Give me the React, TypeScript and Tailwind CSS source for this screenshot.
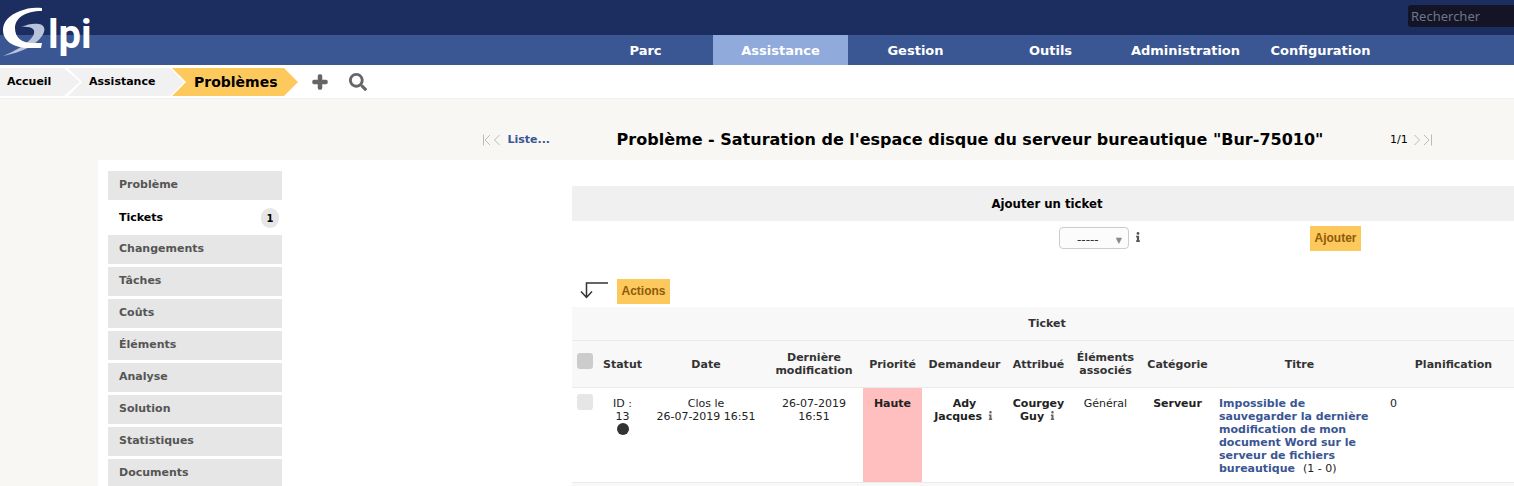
import { FaInfo, FaPlus, FaSearch } from 'react-icons/fa';

const menu = ['Parc', 'Assistance', 'Gestion', 'Outils', 'Administration', 'Configuration'];

const tabs = [
  { label: 'Problème' },
  { label: 'Tickets', count: 1 },
  { label: 'Changements' },
  { label: 'Tâches' },
  { label: 'Coûts' },
  { label: 'Éléments' },
  { label: 'Analyse' },
  { label: 'Solution' },
  { label: 'Statistiques' },
  { label: 'Documents' },
];

const columns = [
  { label: 'Statut', width: 'w-[49px]' },
  { label: 'Date', width: 'w-[118px]' },
  { label: 'Dernière modification', width: 'w-[98px]' },
  { label: 'Priorité', width: 'w-[59px]' },
  { label: 'Demandeur', width: 'w-[85px]' },
  { label: 'Attribué', width: 'w-[63px]' },
  { label: 'Éléments associés', width: 'w-[71px]' },
  { label: 'Catégorie', width: 'w-[73px]' },
  { label: 'Titre', width: 'w-[171px]' },
  { label: 'Planification', width: 'w-auto' },
];

function Logo() {
  return (
    <a href="#" aria-label="Glpi" className="absolute left-0 top-0">
      <svg width="100" height="65" viewBox="0 0 100 65">
        <path
          d="M21 27C28 24 34 23 39 24C45 25 46 30 42 36C36 45 23 52 3 56C15 51 28 44 33 36C37 29 31 26 21 27Z"
          fill="#b9c4dc"
        />
        <path
          d="M42 8C34 7 27 8 20 11C9 15 3 22 3 30C3 41 14 48 29 48H41L42 43H33C21 43 15 37 15 28C15 18 25 11 42 11Z"
          fill="#fff"
        />
        <text x="48" y="48" fontSize="40" fontWeight="700" fontFamily="Roboto, sans-serif" fill="#fff">
          lpi
        </text>
      </svg>
    </a>
  );
}

function Header() {
  return (
    <header className="relative">
      <div className="flex h-[35px] justify-end bg-[#1c2e60] pt-[5px]">
        <input
          type="text"
          aria-label="Rechercher"
          placeholder="Rechercher"
          className="h-[22px] w-[106px] rounded-l-[3px] bg-[#131527] px-[3px] font-['Noto_Sans',sans-serif] text-[13px] text-white placeholder:text-[#6f7489]"
        />
      </div>
      <nav className="flex h-[30px] justify-end bg-[#3a5693] pr-[126px]">
        {menu.map((item) => (
          <a
            key={item}
            href="#"
            className={`flex w-[135px] items-center justify-center pt-px text-[13px] font-bold text-white ${
              item === 'Assistance' ? 'bg-[#8faadb]' : ''
            }`}
          >
            {item}
          </a>
        ))}
      </nav>
      <Logo />
    </header>
  );
}

function Breadcrumb() {
  return (
    <div className="flex h-[34px] items-center border-b border-[#f0f0f0] bg-white pt-px">
      <a
        href="#"
        className="flex h-7 w-[80px] items-center bg-[#f1f1f1] pl-[7px] text-[11px] font-bold text-black [clip-path:polygon(0_0,64px_0,100%_50%,64px_100%,0_100%)]"
      >
        Accueil
      </a>
      <a
        href="#"
        className="-ml-3 flex h-7 w-[116px] items-center bg-[#f1f1f1] pl-[21px] text-[11px] font-bold text-black [clip-path:polygon(0_0,102px_0,100%_50%,102px_100%,0_100%,14px_50%)]"
      >
        Assistance
      </a>
      <a
        href="#"
        className="-ml-3 flex h-7 w-[126px] items-center bg-[#fec95c] pl-[22px] text-[14px] font-bold text-black [clip-path:polygon(0_0,112px_0,100%_50%,112px_100%,0_100%,14px_50%)]"
      >
        Problèmes
      </a>
      <button type="button" aria-label="Ajouter" className="ml-3.5 text-[#666]">
        <FaPlus size={16} stroke="currentColor" strokeWidth={48} className="overflow-visible" />
      </button>
      <button type="button" aria-label="Rechercher" className="ml-[21px] text-[#666]">
        <FaSearch size={18} />
      </button>
    </div>
  );
}

function TitleBar() {
  return (
    <div className="ml-[98px] grid h-[61px] grid-cols-[452px_1fr_124px] items-center pt-[21px]">
      <div className="flex items-center justify-end">
        <svg width="18" height="12" viewBox="0 0 18 12" fill="none" stroke="#bbb" className="mr-[7px]">
          <path d="M1.5 0.5V11.5M8 1L3 6L8 11M17.5 1L12.5 6L17.5 11" />
        </svg>
        <a href="#" className="text-[11px] font-bold text-[#3a5693]">
          Liste...
        </a>
      </div>
      <h1 className="text-center text-[16px] font-bold whitespace-nowrap text-black">
        Problème - Saturation de l'espace disque du serveur bureautique "Bur-75010"
      </h1>
      <div className="flex items-center gap-1.5 text-[11px] text-black">
        1/1
        <svg width="18" height="12" viewBox="0 0 18 12" fill="none" stroke="#bbb">
          <path d="M0.5 1L5.5 6L0.5 11M10 1L15 6L10 11M17.5 0.5V11.5" />
        </svg>
      </div>
    </div>
  );
}

function Sidebar() {
  return (
    <nav className="flex w-[174px] shrink-0 flex-col pt-[11px] text-[11px] font-bold">
      {tabs.map((tab) =>
        tab.count ? (
          <a
            key={tab.label}
            href="#"
            className="flex h-[35px] items-center justify-between pt-px pr-[3px] pl-[11px] text-black"
          >
            {tab.label}
            <span className="flex h-5 w-[18px] items-center justify-center rounded-full bg-[#e6e6e6] text-[10px]">
              {tab.count}
            </span>
          </a>
        ) : (
          <a
            key={tab.label}
            href="#"
            className="mb-[3px] h-[29px] bg-[#e6e6e6] pt-1.5 pl-[11px] leading-[15px] text-[#555] first:mb-0"
          >
            {tab.label}
          </a>
        )
      )}
    </nav>
  );
}

function AddTicket() {
  return (
    <form>
      <h2 className="bg-[#f0f0f0] text-center font-['DejaVu_Sans_Condensed','DejaVu_Sans',sans-serif] text-[13px] leading-[35px] font-bold text-black">
        Ajouter un ticket
      </h2>
      <div className="flex items-start justify-end pt-[5px] pr-[161px]">
        <div className="relative mt-px">
          <select
            aria-label="Ticket"
            className="block h-[22px] w-[70px] appearance-none rounded-[4px] border border-[#ccc] bg-[#fcfcfc] pt-1 pl-[17px] text-[12px] leading-4 text-[#333]"
          >
            <option>-----</option>
          </select>
          <span className="pointer-events-none absolute top-2 right-[7px] text-[8px] leading-3 text-[#888]">▼</span>
        </div>
        <FaInfo size={10} className="mt-1.5 mr-[167px] ml-1 text-[#555]" />
        <button
          type="button"
          className="h-[25px] w-[51px] bg-[#fec95c] pb-0.5 font-['Liberation_Sans',sans-serif] text-[12px] font-bold text-[#8f5a0a]"
        >
          Ajouter
        </button>
      </div>
    </form>
  );
}

function TicketTable() {
  return (
    <table className="w-full table-fixed border-collapse text-[11px] leading-[13px] text-[#222]">
      <colgroup>
        <col className="w-[26px]" />
        {columns.map((column) => (
          <col key={column.label} className={column.width} />
        ))}
      </colgroup>
      <thead className="bg-[#f8f8f8] text-[#333]">
        <tr className="h-[33px] border-b border-[#ebebeb]">
          <th colSpan={11}>Ticket</th>
        </tr>
        <tr className="h-[47px] border-b border-[#ebebeb]">
          <th className="pb-1.5 pl-[5px]">
            <input
              type="checkbox"
              aria-label="Tout cocher"
              className="block size-4 appearance-none rounded-[3px] bg-[#ccc]"
            />
          </th>
          {columns.map((column) => (
            <th key={column.label} className="pt-px">
              {column.label}
            </th>
          ))}
        </tr>
      </thead>
      <tbody>
        <tr className="h-[95px] border-b border-[#ebebeb] text-center align-top *:pt-[9px]">
          <td className="pl-[5px]">
            <input
              type="checkbox"
              aria-label="Ticket 13"
              className="-mt-[3px] block size-4 appearance-none rounded-[3px] bg-[#e6e6e6]"
            />
          </td>
          <td>
            ID :<br />
            13
            <span className="mx-auto block size-3 rounded-full bg-[#333]" />
          </td>
          <td>
            Clos le
            <br />
            26-07-2019 16:51
          </td>
          <td>
            26-07-2019
            <br />
            16:51
          </td>
          <td className="bg-[#ffbfbf] font-bold">Haute</td>
          <td className="font-bold">
            Ady
            <br />
            Jacques <FaInfo size={9} className="inline align-baseline text-[#666]" />
          </td>
          <td className="font-bold">
            Courgey
            <br />
            Guy <FaInfo size={9} className="inline align-baseline text-[#666]" />
          </td>
          <td>Général</td>
          <td className="font-bold">Serveur</td>
          <td className="px-[5px] text-left">
            <a href="#" className="font-bold text-[#3a5693]">
              Impossible de sauvegarder la dernière modification de mon document Word sur le serveur de fichiers
              bureautique
            </a>
            <span className="ml-2">(1 - 0)</span>
          </td>
          <td className="px-[5px] text-left">0</td>
        </tr>
        <tr className="h-4 bg-[#f8f8f8]">
          <td colSpan={11} />
        </tr>
      </tbody>
    </table>
  );
}

export default function App() {
  return (
    <div className="h-screen overflow-hidden bg-[#f8f7f3] font-['DejaVu_Sans',sans-serif]">
      <Header />
      <Breadcrumb />
      <TitleBar />
      <div className="ml-[98px] flex bg-white pl-2.5">
        <Sidebar />
        <main className="-mr-2 ml-[290px] min-w-0 flex-1 pt-[26px]">
          <AddTicket />
          <div className="mt-7 mb-[3px] flex pl-2">
            <svg width="28" height="17" viewBox="0 0 28 17" fill="none" stroke="#333" strokeWidth="1.5" className="mt-[3px] mr-[9px]">
              <path d="M28 1H6.5V15M1 9.5L6.5 15.5L12 9.5" />
            </svg>
            <button
              type="button"
              className="h-[25px] w-[53px] bg-[#fec95c] pb-0.5 font-['Liberation_Sans',sans-serif] text-[12px] font-bold text-[#8f5a0a]"
            >
              Actions
            </button>
          </div>
          <TicketTable />
        </main>
      </div>
    </div>
  );
}
